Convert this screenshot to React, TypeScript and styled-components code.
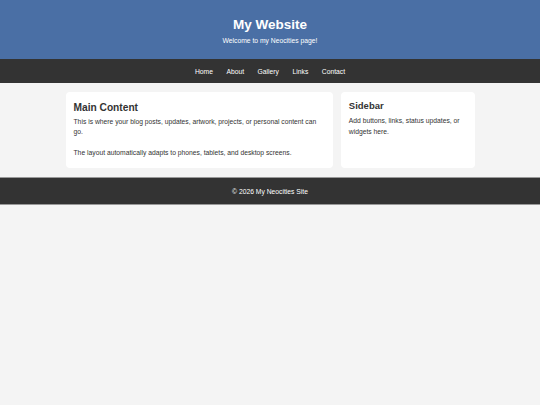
import styled, { createGlobalStyle } from "styled-components";

const GlobalStyle = createGlobalStyle`
  html, body {
    margin: 0;
    padding: 0;
    background: #f4f4f4;
    font-family: "Liberation Sans", Arial, sans-serif;
    color: #333;
    -webkit-font-smoothing: antialiased;
  }
`;

const Page = styled.div`
  min-height: 405px;
  background: #f4f4f4;
`;

const Header = styled.header`
  background: #4a6fa5;
  color: #fff;
  text-align: center;
  padding-top: 16.5px;
  height: 59px;
  box-sizing: border-box;
`;

const Title = styled.h1`
  margin: 0;
  font-size: 13.5px;
  line-height: 16px;
  font-weight: bold;
`;

const Tagline = styled.p`
  margin: 4.5px 0 0;
  font-size: 6.75px;
  line-height: 8px;
`;

const Nav = styled.nav`
  background: #333;
  height: 24px;
  display: flex;
  align-items: center;
  justify-content: center;
  gap: 13.5px;
`;

const NavLink = styled.a`
  color: #fff;
  font-size: 6.75px;
  text-decoration: none;
`;

const Container = styled.main`
  width: 409px;
  margin: 9px auto 9px;
  display: grid;
  grid-template-columns: 2fr 1fr;
  gap: 8px;
`;

const Card = styled.section`
  background: #fff;
  border-radius: 4px;
  padding: 10px 8px 9.5px;
`;

const MainTitle = styled.h2`
  margin: 0 0 2.4px;
  font-size: 10.2px;
  line-height: 12.2px;
  color: #333;
`;

const SideTitle = styled.h3`
  margin: -2.5px 0 5.5px;
  font-size: 9.5px;
  line-height: 11.4px;
  color: #333;
`;

const Text = styled.p`
  margin: 0;
  font-size: 6.75px;
  line-height: 10.8px;
  color: #333;
  & + & {
    margin-top: 10px;
  }
`;

const Footer = styled.footer`
  background: #333;
  color: #fff;
  height: 28px;
  border-top: 1px solid #999;
  border-bottom: 1px solid #999;
  box-sizing: border-box;
  display: flex;
  align-items: center;
  justify-content: center;
  font-size: 6.75px;
`;

const links = ["Home", "About", "Gallery", "Links", "Contact"];

export default function App() {
  return (
    <Page>
      <GlobalStyle />
      <Header>
        <Title>My Website</Title>
        <Tagline>Welcome to my Neocities page!</Tagline>
      </Header>
      <Nav>
        {links.map((l) => (
          <NavLink key={l} href="#">
            {l}
          </NavLink>
        ))}
      </Nav>
      <Container>
        <Card>
          <MainTitle>Main Content</MainTitle>
          <Text>
            This is where your blog posts, updates, artwork, projects, or personal content can go.
          </Text>
          <Text>The layout automatically adapts to phones, tablets, and desktop screens.</Text>
        </Card>
        <Card>
          <SideTitle>Sidebar</SideTitle>
          <Text>Add buttons, links, status updates, or widgets here.</Text>
        </Card>
      </Container>
      <Footer>© 2026 My Neocities Site</Footer>
    </Page>
  );
}
